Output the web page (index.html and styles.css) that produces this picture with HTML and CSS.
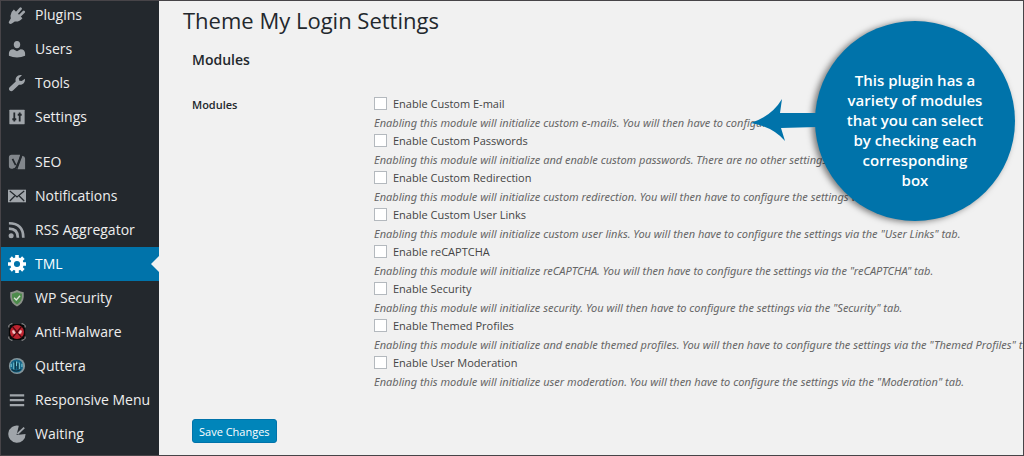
FILE: index.html
```
<!DOCTYPE html>
<html lang="en">
<head>
    <meta charset="utf-8">
    <title>Theme My Login Settings</title>
    <link rel="stylesheet" href="styles.css">
</head>
<body>
    <div class="admin">
        <nav class="sidebar">
            <ul class="menu">
                <li><a href="#"><svg viewBox="0 0 20 20"><path d="M6.500 4L16 13.500q-3.500 4.500-8.500 3.700L4.300 19.500q-1.500 1-2.800 0t0-2.800L3.200 13.500Q1.500 8 6.500 4z"/><path class="prong" d="M10 7.500L14 3M13 11L17.500 6.500"/></svg>Plugins</a></li>
                <li><a href="#"><svg viewBox="0 0 20 20"><path d="M10 9.300c-2.200 0-3.600-1.900-3.600-4.300S7.600 1 10 1s3.600 1.600 3.600 4S12.200 9.300 10 9.300zM6 10.300L10 12.500 14 10.300c3.500 0 5 2.300 5 4.700v2.500q-4 2-9 2t-9-2V15c0-2.400 1.500-4.700 5-4.700z"/></svg>Users</a></li>
                <li><a href="#"><svg viewBox="0 0 20 20"><path d="M18.700 5.300c1 4-2.600 7.500-6.500 6.600l-6.700 6.500c-1 1-2.700 1-3.700 0s-1-2.600 0-3.600l6.800-6.500C7.500 4 11 0 15.500 1.300L12 4.700l.6 2.700 2.700.5z"/></svg>Tools</a></li>
                <li><a href="#"><svg viewBox="0 0 20 20"><path d="M2 2h16q.5 0 .5.500v15q0 .5-.5.500H2q-.5 0-.5-.5v-15Q1.500 2 2 2z"/><path class="cut" d="M7 5v10M13 5v10M4.800 12.500h4.400M10.800 7.500h4.400"/></svg>Settings</a></li>
                <li class="separated"><a href="#"><svg class="dim" viewBox="0 0 20 20"><path d="M4 2h9.500L9.500 17.500H4Q1 17.500 1 14.500V5Q1 2 4 2zM16 3q3 .5 3 3v12h-8.500z"/><path class="cut" d="M5 6.500l3.500 7M16 0L9.500 15.500Q8.300 18.400 5.500 18.300"/></svg>SEO</a></li>
                <li><a href="#"><svg viewBox="0 0 20 20"><path d="M0 3h20v14H0z"/><path class="line" d="M2 4.500l8 6.500 8-6.500M2 15.500L7.500 10M18 15.500L12.500 10"/></svg>Notifications</a></li>
                <li><a href="#"><svg viewBox="0 0 20 20"><circle cx="3.500" cy="16.500" r="2.800"/><path class="wave" d="M1 8.500q10 0 10 10M1 2.500q16 0 16 16"/></svg>RSS Aggregator</a></li>
                <li class="current"><a href="#"><svg viewBox="0 0 20 20"><circle class="ring" cx="10" cy="10" r="5.400"/><path class="teeth" d="M10 0v4M10 16v4M0 10h4M16 10h4M2.900 2.900l2.900 2.900M14.200 14.200l2.900 2.900M2.900 17.100l2.900-2.900M14.200 5.800l2.900-2.900"/></svg>TML</a></li>
                <li><a href="#"><svg viewBox="0 0 20 20"><path fill="#8b9289" d="M10 1Q14 3 17.500 3.500v5.500q-.5 7-7.500 10.500-7-3.500-7.500-10.500V3.500Q6 3 10 1z"/><path fill="#4d8b4b" d="M10 3.500q3.500 1.500 5.500 1.800v4q-.5 5-5.500 8-5-3-5.500-8v-4Q6.500 5 10 3.500z"/><path fill="none" stroke="#dce5d8" stroke-width="1.500" d="M6.800 9.800l2.400 2.400 4.200-4.700"/></svg>WP Security</a></li>
                <li><a href="#"><svg viewBox="0 0 20 20"><path fill="#080808" d="M4 1h12l3 3v12l-3 3H4l-3-3V4z"/><path fill="none" stroke="#b4b4b4" d="M1 5V3L3 1h2M15 1h2l2 2v2M1 15v2l2 2h2M15 19h2l2-2v-2"/><circle cx="10" cy="10" r="7.800" fill="#bd2430"/><path stroke="#4a070e" stroke-width="1.500" d="M5 4l10 12M15 4L5 16"/><path stroke="#f0c8c8" stroke-width="1.800" d="M5 8.500l3 3M15 8.500l-3 3M5.500 11.500l1.500-3M14.500 11.500l-1.500-3"/></svg>Anti-Malware</a></li>
                <li><a href="#"><svg viewBox="0 0 20 20"><circle cx="10" cy="10" r="9" fill="#85969c"/><circle cx="9.500" cy="10" r="7.300" fill="#16678a"/><path fill="none" stroke="#78c5d2" stroke-width="1.300" d="M3.500 11V7.500M6.500 14V6M9.500 10V5M12.500 14V6M15.500 11V7.500"/><path fill="none" stroke="#0b3040" stroke-width="1.400" d="M8 5v9M11 7v7M4 14q5 3.500 10 0"/></svg>Quttera</a></li>
                <li><a href="#"><svg viewBox="0 0 20 20"><path d="M2 3.500h16V6H2zM2 9h16v2.500H2zM2 14.500h16V17H2z"/></svg>Responsive Menu</a></li>
                <li><a href="#"><svg viewBox="0 0 20 20"><path d="M9.500 11L12 .8A9.600 9.600 0 1019.500 10z"/><path class="hand" d="M10.500 10l7.500-7"/></svg>Waiting</a></li>
            </ul>
        </nav>

        <main class="content">
            <h1>Theme My Login Settings</h1>
            <form class="settings">
                <h2>Modules</h2>
                <div class="row">
                    <h3>Modules</h3>
                    <div class="modules">
                        <label><input type="checkbox">Enable Custom E-mail</label>
                        <p>Enabling this module will initialize custom e-mails. You will then have to configure the settings via the "E-mail" tab.</p>
                        <label><input type="checkbox">Enable Custom Passwords</label>
                        <p>Enabling this module will initialize and enable custom passwords. There are no other settings for this module.</p>
                        <label><input type="checkbox">Enable Custom Redirection</label>
                        <p>Enabling this module will initialize custom redirection. You will then have to configure the settings via the "Redirection" tab.</p>
                        <label><input type="checkbox">Enable Custom User Links</label>
                        <p>Enabling this module will initialize custom user links. You will then have to configure the settings via the "User Links" tab.</p>
                        <label><input type="checkbox">Enable reCAPTCHA</label>
                        <p>Enabling this module will initialize reCAPTCHA. You will then have to configure the settings via the "reCAPTCHA" tab.</p>
                        <label><input type="checkbox">Enable Security</label>
                        <p>Enabling this module will initialize security. You will then have to configure the settings via the "Security" tab.</p>
                        <label><input type="checkbox">Enable Themed Profiles</label>
                        <p>Enabling this module will initialize and enable themed profiles. You will then have to configure the settings via the "Themed Profiles" tab.</p>
                        <label><input type="checkbox">Enable User Moderation</label>
                        <p>Enabling this module will initialize user moderation. You will then have to configure the settings via the "Moderation" tab.</p>
                    </div>
                </div>
                <button type="submit">Save Changes</button>
            </form>
        </main>

        <aside class="callout">
            <svg class="arrow" viewBox="0 0 66 44"><path d="M0 24Q21 17 31 0L29 14H66V28L30 29 34 42Q22 28 0 24z"/></svg>
            <p>This plugin has a variety of modules that you can select by checking each corresponding<br>box</p>
        </aside>
    </div>
</body>
</html>
```
FILE: styles.css
```
* {
    box-sizing: border-box;
}
body {
    margin: 0;
    font-family: "Open Sans", "Noto Sans", sans-serif;
    font-size: 11px;
    color: #444;
    background-color: #f1f1f1;
}
h1, h2, h3, p, ul {
    margin: 0;
    padding: 0;
}
.admin {
    position: relative;
    display: flex;
    height: 100vh;
    border: 1px solid #474448;
    overflow: hidden;
}

/* sidebar */
.sidebar {
    flex: 0 0 158px;
    background-color: #23282d;
}
.menu {
    list-style: none;
    margin-top: -3px;
}
.menu a {
    display: flex;
    align-items: center;
    gap: 9px;
    height: 34px;
    padding: 0 0 1px 7px;
    font-size: 14px;
    color: #eee;
    text-decoration: none;
    white-space: nowrap;
}
.menu svg {
    width: 18px;
    height: 18px;
    fill: #a0a5aa;
}
.menu .dim {
    fill: #82878c;
}
.menu .separated {
    margin-top: 11px;
}
.menu .current {
    position: relative;
    background-color: #0073aa;
}
.menu .current a {
    color: #fff;
}
.menu .current::after {
    content: "";
    position: absolute;
    right: 0;
    top: 9px;
    border: 8px solid transparent;
    border-left-width: 0;
    border-right-color: #f1f1f1;
}
.cut, .line {
    fill: none;
    stroke: #23282d;
    stroke-width: 2;
}
.line {
    stroke-width: 1.4;
}
.wave, .hand, .prong {
    fill: none;
    stroke: #a0a5aa;
    stroke-width: 3;
}
.prong {
    stroke-linecap: round;
}
.hand {
    stroke-width: 2;
}
.ring, .teeth {
    fill: none;
    stroke: #fff;
    stroke-width: 4;
}

/* settings page */
.content {
    flex: 1;
    min-width: 0;
    padding: 3px 0 0 24px;
    overflow: hidden;
}
h1 {
    font-size: 22px;
    font-weight: 400;
    line-height: 32px;
    color: #23282d;
}
.settings {
    padding: 14px 0 0 9px;
}
h2 {
    font-size: 14px;
    font-weight: 600;
    line-height: 20px;
    color: #23282d;
}
.row {
    display: flex;
    margin-top: 23px;
}
h3 {
    flex: 0 0 182px;
    font-size: 11px;
    font-weight: 600;
    line-height: 24px;
    color: #23282d;
}
.modules {
    white-space: nowrap;
}
.modules label {
    display: flex;
    align-items: center;
    gap: 6px;
    height: 20px;
}
.modules input {
    appearance: none;
    width: 13px;
    height: 13px;
    margin: 0;
    border: 1px solid #b4b9be;
    background-color: #fff;
}
.modules input:checked {
    background-color: #0073aa;
}
.modules p {
    height: 17px;
    font-family: "Noto Sans", "Open Sans", sans-serif;
    line-height: 20px;
    font-style: italic;
    color: #666;
}
button {
    height: 24px;
    margin-top: 30px;
    padding: 0 6px;
    border: 1px solid #0073aa;
    border-radius: 3px;
    background-color: #0085ba;
    color: #fff;
    font-family: inherit;
    font-size: 11px;
}

/* callout bubble over the page */
.callout {
    position: absolute;
    top: 20px;
    right: 8px;
    display: flex;
    align-items: center;
    justify-content: center;
    width: 200px;
    height: 200px;
    border-radius: 50%;
    background-color: #0073aa;
    box-shadow: -3px 1px 6px rgba(0, 0, 0, 0.5);
}
.callout p {
    width: 150px;
    padding-top: 18px;
    font-size: 15px;
    font-weight: 600;
    line-height: 20px;
    text-align: center;
    color: #fff;
}
.arrow {
    position: absolute;
    top: 78px;
    left: -64px;
    width: 66px;
    height: 44px;
    fill: #0073aa;
}
```
